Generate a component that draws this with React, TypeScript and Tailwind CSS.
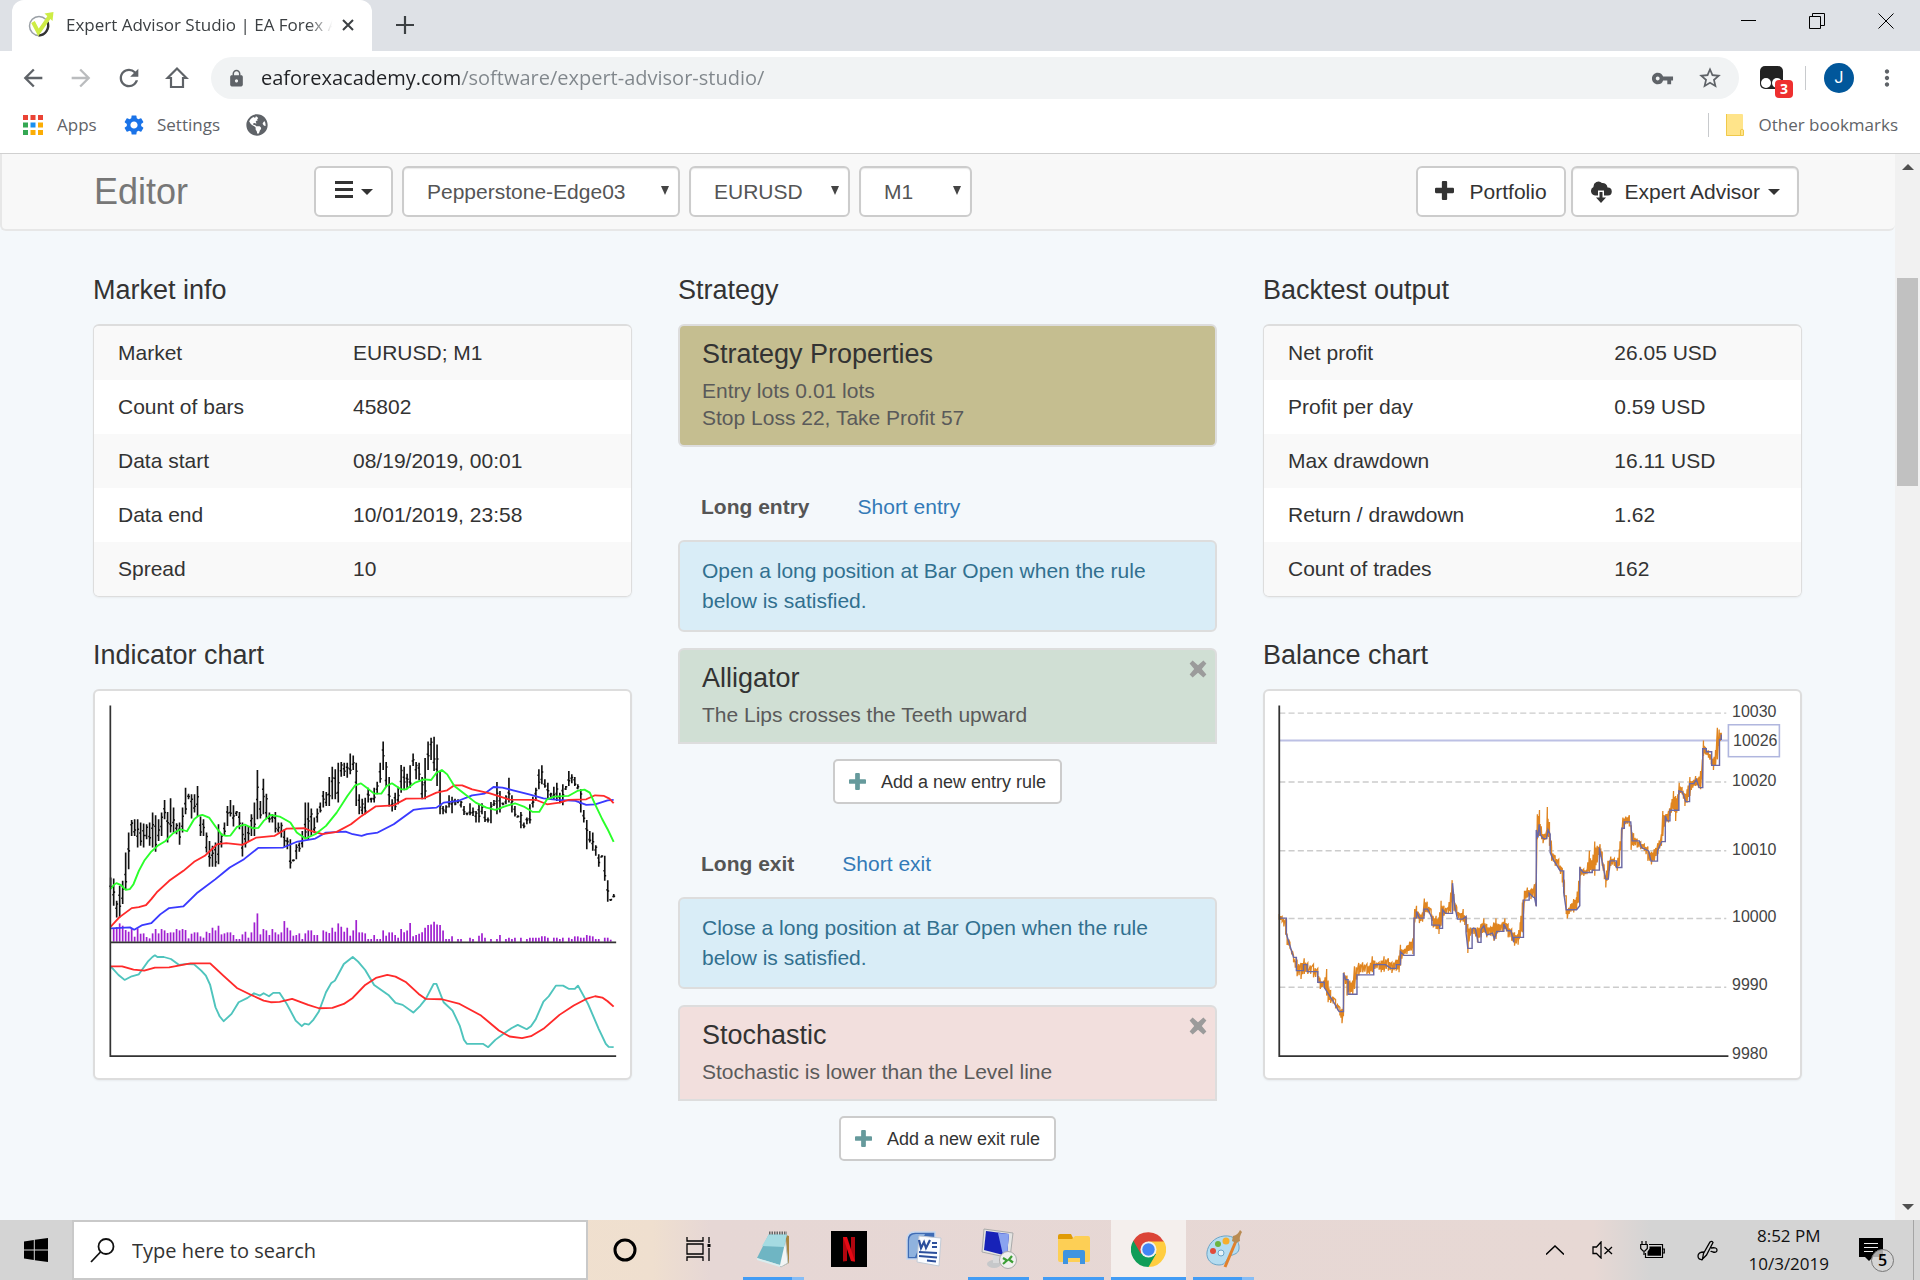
import React from "react";
import { FaGlobeAmericas } from "react-icons/fa";
import {
  MdArrowBack,
  MdArrowForward,
  MdLock,
  MdMoreVert,
  MdRefresh,
  MdSettings,
  MdStarBorder,
  MdVpnKey,
} from "react-icons/md";

// [high, low] of every bar
const BARS: [number, number][] = [
  [595, 630], [598, 680], [665, 715], [620, 715], [605, 675], [520, 630], [460, 570], [422, 470],
  [420, 470], [420, 505], [430, 500], [433, 505], [435, 480], [430, 500], [400, 505], [408, 518],
  [420, 485], [400, 470], [362, 420], [398, 490], [357, 460], [385, 460], [432, 465], [430, 497],
  [385, 460], [325, 405], [343, 360], [345, 418], [345, 400], [320, 412], [412, 470], [420, 470],
  [460, 520], [485, 563], [500, 563], [490, 563], [435, 555], [462, 505], [430, 470], [380, 440],
  [362, 412], [378, 442], [395, 410], [398, 450], [430, 532], [440, 505], [440, 485], [405, 470],
  [370, 470], [272, 420], [365, 418], [298, 405], [343, 420], [400, 430], [405, 430], [398, 460],
  [430, 460], [430, 475], [450, 503], [475, 510], [480, 568], [540, 547], [495, 540], [490, 518],
  [455, 505], [370, 480], [370, 480], [388, 470], [415, 462], [388, 430], [370, 400], [335, 385],
  [338, 380], [293, 380], [262, 360], [270, 360], [250, 370], [248, 292], [250, 290], [250, 295],
  [222, 285], [228, 272], [250, 380], [345, 405], [358, 405], [355, 405], [325, 370], [355, 370],
  [325, 370], [307, 345], [250, 310], [186, 272], [248, 322], [293, 382], [360, 397], [340, 392],
  [322, 375], [257, 340], [262, 333], [283, 330], [258, 325], [222, 260], [248, 300], [250, 303],
  [293, 360], [236, 360], [186, 272], [175, 242], [172, 275], [195, 320], [275, 405], [380, 405],
  [378, 402], [348, 385], [352, 402], [358, 378], [360, 372], [365, 385], [380, 407], [400, 408],
  [372, 408], [385, 410], [395, 430], [375, 430], [372, 405], [395, 428], [415, 430], [368, 432],
  [362, 380], [308, 405], [335, 400], [370, 378], [348, 375], [295, 370], [348, 400], [380, 412],
  [408, 415], [398, 447], [430, 447], [415, 435], [375, 433], [352, 385], [325, 365], [270, 330],
  [258, 315], [300, 325], [310, 358], [340, 360], [322, 360], [310, 365], [340, 372], [315, 378],
  [320, 332], [275, 320], [285, 312], [293, 320], [315, 330], [330, 400], [392, 430], [422, 510],
  [455, 490], [460, 515], [498, 530], [525, 563], [528, 535], [530, 605], [603, 668], [660, 666],
  [645, 655],
];

const VOLUMES = [
  0, 38, 44, 55, 48, 35, 30, 38, 15, 40, 24, 25, 14, 10, 25, 38, 25, 38, 34, 26, 28, 28, 38, 34, 38,
  35, 10, 24, 28, 28, 16, 12, 30, 26, 42, 34, 48, 22, 25, 28, 28, 20, 8, 8, 22, 30, 12, 28, 58, 85,
  22, 38, 34, 20, 38, 28, 22, 28, 62, 42, 34, 18, 20, 25, 8, 25, 34, 34, 20, 20, 0, 34, 30, 26, 42,
  30, 55, 45, 30, 42, 18, 34, 65, 28, 28, 25, 8, 8, 20, 8, 8, 34, 18, 28, 28, 20, 12, 38, 28, 34,
  56, 16, 20, 24, 28, 42, 50, 52, 60, 52, 50, 34, 8, 8, 16, 0, 8, 8, 0, 0, 12, 8, 0, 18, 25, 12, 0,
  8, 0, 8, 20, 0, 8, 12, 8, 12, 0, 12, 0, 8, 12, 12, 12, 12, 16, 16, 12, 0, 12, 12, 8, 12, 0, 12, 8,
  16, 16, 12, 12, 20, 18, 16, 8, 8, 0, 12, 12, 6, 0,
];

const LIPS =
  "86,630 94,618 102,612 115,618 128,632 140,630 150,615 165,575 180,545 200,517 220,498 240,485 260,463 282,450 300,456 320,420 332,410 343,407 362,415 380,442 398,467 410,470 422,469 440,443 462,436 485,447 500,446 515,425 535,407 560,412 590,430 608,460 632,478 660,465 690,440 720,400 750,350 772,318 788,312 810,330 825,343 845,343 860,320 875,312 900,330 915,330 940,310 965,300 985,302 1000,280 1015,272 1030,285 1050,320 1080,345 1110,370 1140,385 1165,392 1190,382 1220,372 1245,382 1270,398 1288,398 1310,360 1330,352 1370,350 1395,335 1415,331 1430,340 1445,375 1465,420 1480,450 1497,488";
const TEETH =
  "86,743 110,715 145,687 165,684 185,678 200,660 215,640 250,605 290,575 320,548 350,530 385,495 410,492 455,497 495,475 545,470 580,448 630,447 650,456 680,465 720,458 760,435 790,410 830,381 880,378 915,358 965,357 1000,340 1030,333 1050,318 1072,318 1100,330 1150,342 1205,361 1280,362 1310,375 1345,370 1370,362 1420,360 1445,348 1470,350 1485,358 1497,372";
const JAWS =
  "86,748 140,745 152,752 175,738 200,732 225,706 250,687 290,682 330,640 380,600 420,565 460,540 500,506 570,505 610,487 660,478 690,460 745,457 765,465 790,470 805,465 835,460 880,435 935,392 960,388 1000,385 1020,370 1060,365 1100,348 1135,343 1160,323 1185,325 1215,333 1260,345 1300,357 1340,362 1390,365 1420,377 1445,375 1480,363 1497,362";
const STOCH_K =
  "86,862 108,888 125,903 145,892 165,886 190,848 203,834 210,829 217,834 235,834 255,840 278,858 300,855 320,856 340,875 353,890 365,918 380,985 392,1013 403,1027 425,1005 445,970 470,957 488,943 505,950 515,943 530,952 542,942 560,942 580,975 605,1025 622,1042 630,1034 642,1037 655,1022 670,998 690,940 705,912 715,905 740,855 765,834 780,848 800,873 825,918 865,948 885,972 905,978 935,1001 955,980 970,960 992,915 1000,915 1020,970 1045,995 1065,1040 1077,1083 1085,1095 1130,1095 1145,1105 1165,1083 1190,1063 1210,1048 1228,1038 1253,1051 1265,1042 1278,1022 1300,968 1315,952 1335,920 1355,920 1372,930 1388,930 1397,920 1425,975 1455,1050 1475,1095 1483,1104 1497,1105";
const STOCH_D =
  "86,862 118,862 150,872 180,875 210,866 250,865 310,853 365,853 405,893 440,927 480,948 515,965 535,970 560,969 595,960 640,978 670,988 708,987 740,975 765,957 800,918 830,897 862,888 885,893 915,910 950,945 970,960 1015,961 1065,975 1125,1010 1175,1055 1205,1073 1240,1078 1265,1072 1300,1050 1345,1008 1385,980 1420,960 1445,952 1465,956 1480,967 1497,983";

// [x, top, bottom] of the equity band
const EQUITY: [number, number, number][] = [
  [82, 705, 722], [90, 712, 728], [100, 722, 765], [104, 765, 798], [112, 790, 808], [122, 830, 850],
  [132, 845, 892], [143, 852, 900], [152, 838, 885], [162, 852, 885], [178, 856, 895], [190, 868, 905],
  [197, 905, 930], [208, 905, 925], [215, 870, 950], [219, 905, 970], [226, 935, 972], [240, 962, 985],
  [252, 985, 1010], [258, 990, 1033], [262, 985, 1012], [264, 880, 890], [272, 890, 950], [280, 905, 945],
  [288, 905, 945], [293, 862, 930], [305, 852, 890], [316, 850, 880], [328, 855, 885], [335, 860, 885],
  [343, 832, 880], [350, 845, 870], [362, 850, 872], [368, 845, 880], [376, 832, 878], [388, 838, 875],
  [398, 850, 882], [410, 842, 875], [418, 830, 880], [422, 797, 860], [430, 812, 830], [440, 800, 825],
  [448, 788, 815], [457, 778, 825], [462, 690, 730], [467, 680, 715], [475, 705, 732], [484, 700, 728],
  [489, 658, 710], [497, 668, 700], [508, 690, 715], [514, 715, 745], [522, 710, 750], [530, 715, 765],
  [536, 665, 740], [544, 680, 710], [556, 685, 705], [563, 640, 700], [567, 603, 670], [572, 645, 695],
  [580, 685, 712], [590, 705, 730], [598, 690, 728], [607, 715, 760], [611, 735, 822], [618, 745, 770],
  [628, 745, 765], [638, 745, 790], [648, 735, 775], [656, 718, 760], [664, 735, 775], [674, 745, 770],
  [684, 730, 785], [690, 718, 780], [698, 735, 760], [708, 730, 758], [715, 718, 750], [724, 735, 775],
  [734, 750, 785], [742, 760, 800], [752, 765, 797], [758, 730, 775], [764, 670, 760], [770, 635, 670],
  [778, 625, 655], [788, 632, 660], [798, 615, 655], [802, 610, 680], [806, 405, 480], [812, 392, 470],
  [818, 462, 480], [822, 465, 492], [832, 455, 480], [834, 383, 470], [840, 430, 500], [846, 505, 545],
  [856, 530, 560], [866, 540, 570], [876, 568, 610], [882, 610, 650], [887, 650, 705], [890, 690, 718],
  [900, 675, 698], [908, 660, 700], [916, 655, 690], [922, 605, 670], [927, 563, 590], [936, 570, 590],
  [945, 572, 585], [952, 515, 580], [960, 545, 580], [967, 487, 590], [974, 500, 550], [982, 495, 515],
  [988, 520, 560], [994, 570, 600], [998, 590, 625], [1004, 545, 600], [1012, 532, 560], [1022, 538, 560],
  [1030, 550, 575], [1036, 510, 560], [1042, 450, 480], [1046, 415, 450], [1054, 412, 435], [1064, 408, 440],
  [1069, 440, 512], [1076, 462, 500], [1086, 480, 505], [1096, 488, 510], [1106, 495, 515], [1116, 502, 545],
  [1126, 520, 556], [1134, 510, 545], [1144, 492, 525], [1154, 465, 500], [1158, 395, 470], [1166, 405, 430],
  [1174, 395, 430], [1182, 370, 400], [1188, 335, 390], [1194, 350, 425], [1200, 345, 395], [1204, 310, 345],
  [1212, 325, 345], [1220, 345, 380], [1226, 330, 370], [1234, 293, 350], [1242, 305, 325], [1250, 290, 320],
  [1258, 295, 325], [1264, 275, 330], [1269, 240, 300], [1272, 183, 230], [1278, 205, 225], [1286, 215, 235],
  [1294, 225, 255], [1300, 240, 272], [1306, 212, 258], [1311, 145, 240], [1316, 150, 200], [1322, 160, 180],
];

const BALANCE =
  "M84 717H102V765L122 835H130V875H150V857H160V878H190V910H208V925L235 970L245 990L250 998H262V882L268 902H275V946H300V888H347V857H380L395 868H410V857H422V818L432 829H460V717H467V697L475 717H488V690H498L510 715V738H532V748H540V692L548 703H568V612L574 680L582 720H597L606 712V762L611 808H623V748H632L640 790H648V752L656 740L664 768L680 762L686 780L692 757H712V735L722 755H732L740 790V775H767V663H783V642L795 655H798L803 682V452L808 475L811 435L815 468L823 478H832L836 452L842 465V520L850 540L870 575H880V640L887 692H916L925 680V567L935 580H960V573H980V505L990 560L998 600H1005L1010 545H1028V565H1043V447H1050V428H1068L1072 485H1092L1098 505L1118 515L1125 546H1143V515L1155 487H1165V410L1170 425H1178V393H1203V335L1213 338L1222 367H1233V313H1245L1252 300L1260 325H1270V208H1280V217H1295V258H1317V180H1322V165";

const equityPath = () => {
  const points: string[] = [];
  EQUITY.forEach(([x, top, bottom], i) => {
    points.push(`${x},${top}`, `${x},${bottom}`);
    const next = EQUITY[i + 1];
    if (!next || next[0] - x < 6) {
      return;
    }
    const mid = (x + next[0]) / 2;
    const hi = (top + next[1]) / 2;
    const lo = (bottom + next[2]) / 2;
    const pad = (lo - hi) * 0.15;
    points.push(`${mid - 1},${hi + pad}`, `${mid},${lo - pad}`, `${mid + 2},${hi + pad * 2}`);
  });
  return points.join(" ");
};

const PLOT = "translate(-15 -11.500) scale(0.35714 0.33333)";
const CHROME_FONT = "font-['Open_Sans',sans-serif]";

const MARKET_INFO = [
  ["Market", "EURUSD; M1"],
  ["Count of bars", "45802"],
  ["Data start", "08/19/2019, 00:01"],
  ["Data end", "10/01/2019, 23:58"],
  ["Spread", "10"],
];

const BACKTEST = [
  ["Net profit", "26.05 USD"],
  ["Profit per day", "0.59 USD"],
  ["Max drawdown", "16.11 USD"],
  ["Return / drawdown", "1.62"],
  ["Count of trades", "162"],
];

const IconPlus = ({ className = "" }: { className?: string }) => (
  <svg viewBox="0 0 18 18" className={className} fill="currentColor">
    <path d="M7.500 0h3q1 0 1 1v5.500H17q1 0 1 1v3q0 1-1 1h-5.500V17q0 1-1 1h-3q-1 0-1-1v-5.500H1q-1 0-1-1v-3q0-1 1-1h5.500V1q0-1 1-1z" />
  </svg>
);

const IconRemove = () => (
  <svg viewBox="0 0 18 18" className="w-[18px] h-[18px]" fill="currentColor">
    <path d="M3.6.6 9 5.2 14.4.6 17.4 3.6 12.8 9l4.6 5.4-3 3L9 12.8l-5.4 4.6-3-3L5.2 9 .6 3.6z" />
  </svg>
);

const Caret = ({ className = "" }: { className?: string }) => (
  <svg viewBox="0 0 12 6" className={`w-3 h-[6px] ${className}`} fill="currentColor">
    <path d="M0 0h12L6 6z" />
  </svg>
);

const TabStrip = () => (
  <div className="flex items-start justify-between h-[51px] bg-[#dee1e6]">
    <div className="flex h-full pl-3">
      <div className="flex items-center w-[360px] h-full pl-4 pr-[14px] pb-px bg-white rounded-t-xl">
        <svg viewBox="0 0 26 26" className="w-[26px] h-[26px] shrink-0">
          <circle cx="11" cy="14" r="9.500" fill="none" stroke="#9aa0a6" strokeWidth="1.500" />
          <path d="M19.500 10a10 10 0 0 1-9 13.500" fill="none" stroke="#333" strokeWidth="2.400" />
          <path d="M5 10l5.500 10.500L22 4" fill="none" stroke="#cdec45" strokeWidth="4" />
          <path d="M16.500 1.500L25.500 0l-1 9z" fill="#cdec45" />
        </svg>
        <span
          className={`${CHROME_FONT} ml-3 flex-1 whitespace-nowrap text-[17px] text-[#3c4043] [mask-image:linear-gradient(90deg,#000_89%,transparent_98%)]`}
        >
          Expert Advisor Studio | EA Forex A
        </span>
        <button aria-label="Close tab" className="p-1 text-[#3c4043]">
          <svg viewBox="0 0 12 12" className="w-3 h-3" stroke="currentColor" strokeWidth="2">
            <path d="M1 1l10 10M11 1L1 11" />
          </svg>
        </button>
      </div>
      <button aria-label="New tab" className="flex items-center pl-6 pb-px text-[#3c4043]">
        <svg viewBox="0 0 18 18" className="w-[18px] h-[18px]" stroke="currentColor" strokeWidth="2.200">
          <path d="M9 0v18M0 9h18" />
        </svg>
      </button>
    </div>
    <div className="flex text-black">
      <button aria-label="Minimize" className="flex items-center justify-center w-[68px] h-[42px]">
        <svg viewBox="0 0 16 16" className="w-4 h-4" stroke="currentColor">
          <path d="M0 7.500h15" />
        </svg>
      </button>
      <button aria-label="Restore" className="flex items-center justify-center w-[68px] h-[42px]">
        <svg viewBox="0 0 16 16" className="w-4 h-4" fill="none" stroke="currentColor">
          <path d="M.5 3.500h11v12H.5zM3.500 3.500v-3h12v12h-4" />
        </svg>
      </button>
      <button aria-label="Close" className="flex items-center justify-center w-[69px] h-[42px]">
        <svg viewBox="0 0 16 16" className="w-4 h-4" stroke="currentColor">
          <path d="M.5.5l15 15M15.500.5l-15 15" />
        </svg>
      </button>
    </div>
  </div>
);

const Toolbar = () => (
  <div className="flex items-center h-[54px] pl-[19px] pr-5 text-[#5f6368]">
    <button aria-label="Back" className="w-12">
      <MdArrowBack className="w-[28px] h-[28px]" />
    </button>
    <button aria-label="Forward" className="w-12 text-[#babcbe]">
      <MdArrowForward className="w-[28px] h-[28px]" />
    </button>
    <button aria-label="Reload" className="w-12">
      <MdRefresh className="w-[28px] h-[28px]" />
    </button>
    <button aria-label="Home" className="w-12">
      <svg viewBox="0 0 24 24" className="w-6 h-6 ml-[2px]" fill="none" stroke="currentColor" strokeWidth="2.200">
        <path d="M2.500 12L12 2.500l9.500 9.500H18v9H6v-9z" />
      </svg>
    </button>
    <div className="flex items-center flex-1 h-[42px] pl-4 pr-4 rounded-full bg-[#f1f3f4]">
      <MdLock className="w-[19px] h-[19px] shrink-0" />
      <input
        aria-label="Address"
        readOnly
        value="eaforexacademy.com/software/expert-advisor-studio/"
        className={`${CHROME_FONT} ml-[15px] flex-1 outline-none text-xl text-transparent bg-clip-text bg-[linear-gradient(90deg,#202124_200px,#80868b_200px)]`}
      />
      <button aria-label="Passwords">
        <MdVpnKey className="w-[23px] h-[23px]" />
      </button>
      <button aria-label="Bookmark this page" className="ml-[23px]">
        <MdStarBorder className="w-[26px] h-[26px]" />
      </button>
    </div>
    <button aria-label="Extension" className="relative ml-5 w-[34px] h-[34px]">
      <svg viewBox="0 0 34 34" className="w-[34px] h-[34px]">
        <rect x="1" y="5" width="23" height="23" rx="5" fill="#222" />
        <circle cx="7" cy="22" r="5" fill="#fff" />
        <circle cx="18" cy="22" r="5" fill="#fff" />
      </svg>
      <span className="absolute left-4 top-[19px] w-[18px] h-[18px] rounded-sm bg-[#ee2f2f] font-['Open_Sans',sans-serif] text-sm leading-[18px] font-bold text-white text-center">
        3
      </span>
    </button>
    <span className="ml-3 w-px h-6 bg-[#c8cacd]" />
    <button
      aria-label="Profile"
      className="ml-[18px] w-[30px] h-[30px] rounded-full bg-[#01579b] font-[Roboto,sans-serif] text-white text-base leading-[30px]"
    >
      J
    </button>
    <button aria-label="Menu" className="ml-5">
      <MdMoreVert className="w-[26px] h-[26px]" />
    </button>
  </div>
);

const APP_DOTS = [
  "#ea4335", "#ea4335", "#ea4335",
  "#34a853", "#1a8ff0", "#fbad05",
  "#34a853", "#fbad05", "#fbad05",
];

const BookmarksBar = () => (
  <div
    className={`${CHROME_FONT} flex items-center h-[49px] pb-[8px] pl-[23px] pr-[22px] border-b border-[#d0d0d0] text-[17px] text-[#5f6368]`}
  >
    <a href="#apps" className="flex items-center w-[99px]">
      <svg viewBox="0 0 20 20" className="w-5 h-5 mr-[14px]">
        {APP_DOTS.map((fill, i) => (
          <rect key={i} x={(i % 3) * 7.5} y={Math.floor(i / 3) * 7.5} width="5" height="5" fill={fill} />
        ))}
      </svg>
      Apps
    </a>
    <a href="#settings" className="flex items-center w-[124px]">
      <MdSettings className="w-6 h-6 mr-[11px] text-[#1a73e8]" />
      Settings
    </a>
    <a href="#site" aria-label="Site">
      <FaGlobeAmericas className="w-[22px] h-[22px]" />
    </a>
    <span className="ml-auto w-px h-6 bg-[#c8cacd]" />
    <a href="#other" className="flex items-center pl-[17px]">
      <svg viewBox="0 0 19 22" className="w-[19px] h-[22px] mr-[13px]">
        <path d="M0 0h16q1 0 1 1v21H0z" fill="#ffe48a" />
        <path d="M.5 0v21.500h17V16a2 2 0 0 0-3 0v5.500" fill="none" stroke="#f0c94a" />
      </svg>
      Other bookmarks
    </a>
  </div>
);

interface NavSelectProps {
  label: string;
  value: string;
  className: string;
}

const NavSelect: React.FC<NavSelectProps> = ({ label, value, className }) => (
  <div className={`relative ${className}`}>
    <select
      aria-label={label}
      className="appearance-none w-full h-[51px] pl-[23px] pr-6 rounded-md border-2 border-[#ccc] bg-white text-[21px] text-[#555] shadow-[inset_0_1px_1px_rgba(0,0,0,0.08)]"
    >
      <option>{value}</option>
    </select>
    <svg viewBox="0 0 8 9" className="absolute right-[11px] top-5 w-2 h-[9px] pointer-events-none" fill="#444">
      <path d="M0 0h8L4 9z" />
    </svg>
  </div>
);

const EditorNav = () => (
  <nav className="h-[77px] px-4 rounded-b-md border-b-2 border-l-2 border-[#e7e7e7] bg-[#f8f8f8]">
    <div className="flex items-center h-full max-w-[1709px] mx-auto pr-1 text-[#333]">
      <a href="#editor" className="w-[220px] text-4xl text-[#777]">
        Editor
      </a>
      <button
        aria-label="Menu"
        className="flex items-center justify-center gap-2 w-[79px] h-[51px] rounded-md border-2 border-[#ccc] bg-white"
      >
        <svg viewBox="0 0 18 18" className="w-[18px] h-[18px] mb-1" fill="currentColor">
          <path d="M0 0h18v3H0zM0 7h18v3H0zM0 14h18v3H0z" />
        </svg>
        <Caret />
      </button>
      <NavSelect label="Data source" value="Pepperstone-Edge03" className="ml-[9px] w-[278px]" />
      <NavSelect label="Symbol" value="EURUSD" className="ml-[9px] w-[161px]" />
      <NavSelect label="Period" value="M1" className="ml-[9px] w-[113px]" />
      <button className="flex items-center ml-auto h-[51px] px-[17px] rounded-md border-2 border-[#ccc] bg-white text-[21px]">
        <IconPlus className="w-[19px] h-[19px] mr-4 mb-[2px]" />
        Portfolio
      </button>
      <button className="flex items-center ml-[5px] h-[51px] px-[17px] rounded-md border-2 border-[#ccc] bg-white text-[21px] shadow-[inset_0_1px_1px_rgba(0,0,0,0.1)]">
        <svg viewBox="0 0 22 22" className="w-[22px] h-[22px] mr-[13px]" fill="currentColor">
          <path d="M5 14.500a4.500 4.500 0 0 1-1.500-8.500A5 5 0 0 1 12 2a5 5 0 0 1 5.500 4.500A4 4 0 0 1 18 14.500H14V9.500H8v5z" />
          <path d="M9.500 11h3v5.500H16L11 22l-5-5.500h3.500z" />
        </svg>
        Expert Advisor
        <Caret className="ml-2" />
      </button>
    </div>
  </nav>
);

const Heading: React.FC<{ children: React.ReactNode }> = ({ children }) => (
  <h2 className="mb-[19px] text-[27px] leading-[30px] text-[#333]">{children}</h2>
);

const InfoTable = ({ rows, labelClass }: { rows: string[][]; labelClass: string }) => (
  <div className="rounded-md border border-t-2 border-[#ddd] overflow-hidden shadow-xs">
    <table className="w-full table-fixed text-[21px] leading-[30px] text-[#333]">
      <tbody>
        {rows.map(([name, value]) => (
          <tr key={name} className="h-[54px] odd:bg-[#f9f9f9] even:bg-white">
            <th scope="row" className={`pl-6 text-left font-normal ${labelClass}`}>
              {name}
            </th>
            <td className="pl-3">{value}</td>
          </tr>
        ))}
      </tbody>
    </table>
  </div>
);

const IndicatorChart = () => (
  <svg viewBox="0 0 536 388" className="block w-full" role="img" aria-label="Indicator chart">
    <g transform={PLOT} fill="none">
      <g stroke="#a020d0" strokeWidth="4.800">
        {VOLUMES.map((v, i) => v > 0 && <path key={i} d={`M${86 + i * 8.4} 788v${-v}`} />)}
      </g>
      <g stroke="#111" strokeWidth="4.600">
        {BARS.map(([high, low], i) => {
          const x = 86 + i * 8.4;
          const open = low - (low - high) * (0.25 + ((i * 5) % 4) * 0.15);
          const close = low - (low - high) * (0.2 + ((i * 7) % 5) * 0.15);
          return <path key={i} d={`M${x} ${high}V${low}M${x - 4} ${open}h4M${x} ${close}h4`} />;
        })}
      </g>
      <g strokeWidth="5.400" strokeLinejoin="round">
        <polyline points={JAWS} stroke="#3a3aff" />
        <polyline points={TEETH} stroke="#ff2a2a" />
        <polyline points={LIPS} stroke="#2aff2a" />
        <polyline points={STOCH_K} stroke="#4fc4bd" />
        <polyline points={STOCH_D} stroke="#ff2a2a" />
      </g>
      <path d="M85 78V1132H1504M85 790H1504" stroke="#333" strokeWidth="4.800" />
    </g>
  </svg>
);

const BALANCE_LABELS: [string, number][] = [
  ["10030", 26],
  ["10020", 95],
  ["10010", 164],
  ["10000", 231],
  ["9990", 300],
  ["9980", 369],
];

const BalanceChart = () => (
  <svg viewBox="0 0 536 388" className="block w-full" role="img" aria-label="Balance chart">
    <g transform={PLOT} fill="none">
      <path
        d="M82 101H1336M82 308H1336M82 515H1336M82 718H1336M82 925H1336"
        stroke="#ccc"
        strokeWidth="4.500"
        strokeDasharray="17 9"
      />
      <path d="M82 183H1341" stroke="#bcc0e4" strokeWidth="6" />
      <polyline points={equityPath()} stroke="#e08520" strokeWidth="3.600" />
      <path d={BALANCE} stroke="#6a68a4" strokeWidth="4" />
      <path d="M82 78V1132H1342" stroke="#333" strokeWidth="5" />
      <rect x="1342" y="136" width="143" height="96" stroke="#b0b6de" strokeWidth="4.500" fill="#fff" />
    </g>
    <g fill="#444" className="font-['Liberation_Sans',sans-serif] text-base">
      {BALANCE_LABELS.map(([label, y]) => (
        <text key={label} x="468" y={y}>
          {label}
        </text>
      ))}
      <text x="469" y="55">
        10026
      </text>
    </g>
  </svg>
);

const ChartCard: React.FC<{ title: string; children: React.ReactNode }> = ({ title, children }) => (
  <section className="mt-[43px]">
    <Heading>{title}</Heading>
    <div className="rounded-md border-2 border-[#ddd] bg-white shadow-xs">{children}</div>
  </section>
);

interface RuleCardProps {
  title: string;
  lines: string[];
  className: string;
  removable?: boolean;
}

const RuleCard: React.FC<RuleCardProps> = ({ title, lines, className, removable }) => (
  <div className={`relative border-2 border-[#ddd] px-[22px] pt-[13px] pb-[14px] ${className}`}>
    <h3 className="mb-2 text-[27px] leading-[30px] text-[#333]">{title}</h3>
    {lines.map((line) => (
      <p key={line} className="text-[21px] leading-[27px] text-[#5a5a5a]">
        {line}
      </p>
    ))}
    {removable && (
      <button aria-label={`Remove ${title}`} className="absolute right-2 top-[10px] text-[#9b9b9b]">
        <IconRemove />
      </button>
    )}
  </div>
);

interface RuleSectionProps {
  kind: string;
  note: string;
  title: string;
  line: string;
  className: string;
}

const RuleSection: React.FC<RuleSectionProps> = ({ kind, note, title, line, className }) => (
  <section className="mt-[45px]">
    <div className="flex gap-12 px-[23px] text-[21px] leading-[30px]">
      <a href={`#long-${kind}`} className="font-bold text-[#555]">
        Long {kind}
      </a>
      <a href={`#short-${kind}`} className="text-[#337ab7]">
        Short {kind}
      </a>
    </div>
    <p className="mt-[18px] mb-4 px-[22px] py-[14px] rounded-md border-2 border-[#ddd] bg-[#d9edf7] text-[21px] leading-[30px] text-[#31708f]">
      {note}
    </p>
    <RuleCard title={title} lines={[line]} className={`rounded-t-md ${className}`} removable />
    <button className="flex items-center mx-auto mt-[15px] h-[45px] px-[14px] rounded-[5px] border-2 border-[#ccc] bg-white text-lg text-[#333]">
      <IconPlus className="w-[17px] h-[17px] mr-[15px] text-[#669a9c]" />
      Add a new {kind} rule
    </button>
  </section>
);

const ScrollBar = () => (
  <div className="flex flex-col items-center w-[25px] shrink-0 py-[10px] bg-[#f1f1f1] text-[#505050]">
    <Caret className="rotate-180" />
    <div className="mt-[108px] w-[21px] h-[208px] bg-[#c1c1c1]" />
    <Caret className="mt-auto" />
  </div>
);

const NotepadIcon = () => (
  <svg viewBox="0 0 36 40" className="w-9 h-10">
    <path d="M30 6l3 1v27l-6 3z" fill="#a8843f" />
    <path d="M29 6l3 28-7 4-6-5z" fill="#f2f5f5" stroke="#b9c3c4" />
    <path d="M13 5h18L24 36 1 29z" fill="#6fb5c3" />
    <path d="M13 5h18l-3 13-22-1z" fill="#a5dbe2" />
    <path d="M13 4h18" stroke="#666" strokeWidth="3" strokeDasharray="1.500 1" />
    <path d="M1 29l23 7v2L1 31z" fill="#d9eef0" />
  </svg>
);

const NetflixIcon = () => (
  <svg viewBox="0 0 36 36" className="w-9 h-9">
    <path d="M0 0h36v36H0z" />
    <path d="M12 6h4v24l-4 .5zM20 6h4v24.500l-4-.5z" fill="#b1060f" />
    <path d="M12 6h4l8 24.500-4-.5z" fill="#e50914" />
  </svg>
);

const WordIcon = () => (
  <svg viewBox="0 0 36 36" className="w-9 h-9">
    <path d="M1 9q0-8 8-8h20v27H1z" fill="#3f6cb5" stroke="#c7d8ee" strokeWidth="1.500" />
    <path d="M3 10q0-7 7-7h9L9 26H3z" fill="#8fb2de" />
    <path d="M13 5l22 2-2 28-22-4z" fill="#fafcff" stroke="#c3cbd6" />
    <path
      d="M13 9l2 8 3-6 2 6 4-8M26 12h5M26 16h5M13 21l18 1M13 25l18 1.500M21 29.500l9 1"
      fill="none"
      stroke="#2c4f9c"
      strokeWidth="2.200"
    />
  </svg>
);

const RemoteIcon = () => (
  <svg viewBox="0 0 36 42" className="w-9 h-[42px]">
    <ellipse cx="13" cy="36" rx="7" ry="4" fill="#c6c8ca" />
    <path d="M12 26l6 1v8h-6z" fill="#d9dadb" />
    <path d="M3 1l29 4-3 25L1 24z" fill="#e4e4e2" stroke="#aaa" />
    <path d="M5 3l23 3-2 22L3 22z" fill="#1722b8" />
    <path d="M17 5l11 1-2 22-4-1z" fill="#8aa3f0" />
    <circle cx="27" cy="32" r="8.500" fill="#f0f0ee" stroke="#aaa" />
    <path d="M22 30l4 2.500-4 3.500M31 28l-3 3.500 4 3" fill="none" stroke="#3d9f35" strokeWidth="2.200" />
  </svg>
);

const ExplorerIcon = () => (
  <svg viewBox="0 0 32 30" className="w-8 h-[30px]">
    <path d="M0 2q0-2 2-2h11l2 4v6H0z" fill="#e09b06" />
    <path d="M0 5h14l3-3h13q2 0 2 2v22q0 2-2 2H2q-2 0-2-2z" fill="#fdcf55" />
    <path d="M5 30V18q0-2 2-2h18q2 0 2 2v12h-5v-6H10v6z" fill="#3f94e0" />
  </svg>
);

const ChromeIcon = () => (
  <svg viewBox="0 0 48 48" className="w-[35px] h-[35px]">
    <path d="M24 24V12h20.800A24 24 0 0 1 24 48z" fill="#ffcd40" />
    <path d="M24 24l10.400 6L24 48A24 24 0 0 1 3.200 12z" fill="#0f9d58" />
    <path d="M24 13h20.800L34.400 30 24 24z" fill="#ffcd40" />
    <path d="M3.200 12A24 24 0 0 1 44.800 13H24L13.600 30z" fill="#db4437" />
    <circle cx="24" cy="24" r="11" fill="#f1f1f1" />
    <circle cx="24" cy="24" r="8.500" fill="#4285f4" />
  </svg>
);

const PaintIcon = () => (
  <svg viewBox="0 0 36 38" className="w-9 h-[38px]">
    <path
      d="M18 6c10-1 16 5 15 13-1 6-7 5-10 8s-3 8-10 8C5 35 0 29 1 22S8 7 18 6z"
      fill="#b5dcf0"
      stroke="#6ba5c8"
    />
    <circle cx="15" cy="23" r="3" fill="#e6f2f8" stroke="#6ba5c8" />
    <circle cx="7" cy="21" r="3" fill="#e14b3b" />
    <circle cx="12" cy="14" r="3" fill="#6cb43f" />
    <circle cx="20" cy="11" r="3.500" fill="#f6ae2b" />
    <path d="M30 11L19 37" stroke="#e1812c" strokeWidth="3" />
    <path d="M27 6q5-1 7-6l2 2q-3 5-2 9l-4 2-4-2z" fill="#b98b52" />
  </svg>
);

const TaskViewIcon = () => (
  <svg viewBox="0 0 26 24" className="w-[26px] h-6" fill="none" stroke="#000" strokeWidth="1.300">
    <path d="M1 0v4h16V0M1 7h16v10H1zM1 24v-4h16v4M23 0v6M23 11v13" />
    <path d="M21.500 7h3v3h-3z" fill="#000" stroke="none" />
  </svg>
);

interface TaskItem {
  name: string;
  icon: React.ReactNode;
  state: "idle" | "open" | "grouped" | "active";
}

const TASKS: TaskItem[] = [
  { name: "Task view", icon: <TaskViewIcon />, state: "idle" },
  { name: "Notepad", icon: <NotepadIcon />, state: "grouped" },
  { name: "Netflix", icon: <NetflixIcon />, state: "idle" },
  { name: "Word", icon: <WordIcon />, state: "idle" },
  { name: "Remote Desktop", icon: <RemoteIcon />, state: "open" },
  { name: "File Explorer", icon: <ExplorerIcon />, state: "open" },
  { name: "Chrome", icon: <ChromeIcon />, state: "active" },
  { name: "Paint", icon: <PaintIcon />, state: "grouped" },
];

const TaskButton = ({ name, icon, state }: TaskItem) => (
  <button
    aria-label={name}
    className={`flex flex-col items-center w-[75px] h-full ${state === "active" ? "bg-[#f4efed]" : ""}`}
  >
    <span className="flex items-center justify-center flex-1 pt-px">{icon}</span>
    <span className={`flex h-[3px] ${state === "active" ? "w-full" : "w-[61px]"}`}>
      {state !== "idle" && <span className="flex-1 bg-[#429cf5]" />}
      {state === "grouped" && <span className="w-3 bg-[#86bdf6]" />}
    </span>
  </button>
);

const Tray = () => (
  <div className="flex items-center h-full ml-auto">
    <button aria-label="Show hidden icons" className="mr-7">
      <svg viewBox="0 0 18 10" className="w-[18px] h-[10px]" fill="none" stroke="#000" strokeWidth="1.500">
        <path d="M0 9.500l9-8.500 9 8.500" />
      </svg>
    </button>
    <button aria-label="Volume" className="mr-[27px]">
      <svg viewBox="0 0 21 18" className="w-[21px] h-[18px]" fill="none" stroke="#000" strokeWidth="1.300">
        <path d="M1 6h3.500L9 1v16l-4.500-4.500H1zM12.500 6l7.500 7M20 6l-7.500 7" />
      </svg>
    </button>
    <button aria-label="Battery" className="mr-8">
      <svg viewBox="0 0 25 18" className="w-[25px] h-[18px]" fill="none" stroke="#000" strokeWidth="1.200">
        <path d="M9 3.500h13.500v13H5.500V12M22.500 8h1.800v4h-1.800M2 0v3M6 0v3M.7 3.500h6.600v4L5 10H3L.7 7.500zM4 10v4" />
        <path d="M9.500 5.500H21v9.300H7.500v-4l2-3z" fill="#000" stroke="none" />
      </svg>
    </button>
    <button aria-label="Ink workspace" className="mr-[30px]">
      <svg viewBox="0 0 21 21" className="w-[21px] h-[21px]" fill="none" stroke="#000" strokeWidth="1.300">
        <path d="M13 2q2-1.500 3 .5L9.500 15l-4 4 1-5.500zM7 12q-6 0-6 4t5 3.500M14 8q6-1 6 2t-4 2q-2-1-2 0" />
      </svg>
    </button>
    <div className={`${CHROME_FONT} mr-[30px] pb-px text-center text-[17px] leading-7 text-[#111]`}>
      <p>8:52 PM</p>
      <p>10/3/2019</p>
    </div>
    <button aria-label="Notifications" className="relative w-9 h-9">
      <svg viewBox="0 0 36 36" className="w-9 h-9">
        <path d="M0 6h24v19H14l-4 4-4-4H0z" />
        <path d="M5 11.500h14M5 15.500h14M5 19.500h9" stroke="#eee" />
      </svg>
      <span
        className={`${CHROME_FONT} absolute left-3 top-[17px] w-[23px] h-[23px] rounded-full border border-[#777] bg-[#d4d4d4]/80 text-base leading-[21px] font-semibold text-black`}
      >
        5
      </span>
    </button>
    <span className="ml-[18px] mr-[6px] w-px h-full bg-[#a5a5a5]" />
  </div>
);

const Taskbar = () => (
  <footer className="flex items-center h-[60px] bg-[linear-gradient(90deg,#d4d4d4_0%,#d4d4d4_5%,#f0e0ce_28%,#efdfcf_34%,#e6d7d5_37%,#e7d8d4_83%,#d4d4d4_86%)]">
    <button aria-label="Start" className="flex items-center justify-center w-[72px]">
      <svg viewBox="0 0 24 24" className="w-6 h-6">
        <path d="M0 3.400L9.800 2v9.500H0zM10.800 1.800L24 0v11.500H10.800zM0 12.500h9.800V22L0 20.600zM10.800 12.500H24V24l-13.200-1.800z" />
      </svg>
    </button>
    <label className="flex items-center w-[516px] h-full pl-4 border-2 border-[#c9c9c9] bg-white">
      <svg viewBox="0 0 25 25" className="w-[25px] h-[25px]" fill="none" stroke="#111" strokeWidth="1.800">
        <circle cx="16" cy="8.500" r="7.500" />
        <path d="M10.500 14L1 24" />
      </svg>
      <input
        aria-label="Search"
        placeholder="Type here to search"
        className={`${CHROME_FONT} ml-[17px] flex-1 pt-[2px] outline-none text-xl placeholder:text-[#333]`}
      />
    </label>
    <button aria-label="Cortana" className="flex items-center justify-center w-[73px] h-full">
      <svg viewBox="0 0 24 24" className="w-6 h-6" fill="none" stroke="#000" strokeWidth="3">
        <circle cx="12" cy="12" r="10" />
      </svg>
    </button>
    {TASKS.map((task) => (
      <TaskButton key={task.name} {...task} />
    ))}
    <Tray />
  </footer>
);

const App = () => {
  return (
    <div className="flex flex-col min-h-screen bg-white font-['Liberation_Sans',Arial,sans-serif]">
      <header>
        <TabStrip />
        <Toolbar />
        <BookmarksBar />
      </header>
      <div className="flex flex-1">
        <div className="flex-1 bg-[#f4f8fb]">
          <EditorNav />
          <main className="grid grid-cols-3 gap-[46px] max-w-[1709px] mx-auto pt-11">
            <div>
              <Heading>Market info</Heading>
              <InfoTable rows={MARKET_INFO} labelClass="w-[46%]" />
              <ChartCard title="Indicator chart">
                <IndicatorChart />
              </ChartCard>
            </div>
            <div>
              <Heading>Strategy</Heading>
              <RuleCard
                title="Strategy Properties"
                lines={["Entry lots 0.01 lots", "Stop Loss 22, Take Profit 57"]}
                className="rounded-md bg-[#c5be90]"
              />
              <RuleSection
                kind="entry"
                note="Open a long position at Bar Open when the rule below is satisfied."
                title="Alligator"
                line="The Lips crosses the Teeth upward"
                className="bg-[#d0dfd4]"
              />
              <RuleSection
                kind="exit"
                note="Close a long position at Bar Open when the rule below is satisfied."
                title="Stochastic"
                line="Stochastic is lower than the Level line"
                className="bg-[#f2dfdd]"
              />
            </div>
            <div>
              <Heading>Backtest output</Heading>
              <InfoTable rows={BACKTEST} labelClass="w-[63%]" />
              <ChartCard title="Balance chart">
                <BalanceChart />
              </ChartCard>
            </div>
          </main>
        </div>
        <ScrollBar />
      </div>
      <Taskbar />
    </div>
  );
};

export default App;
